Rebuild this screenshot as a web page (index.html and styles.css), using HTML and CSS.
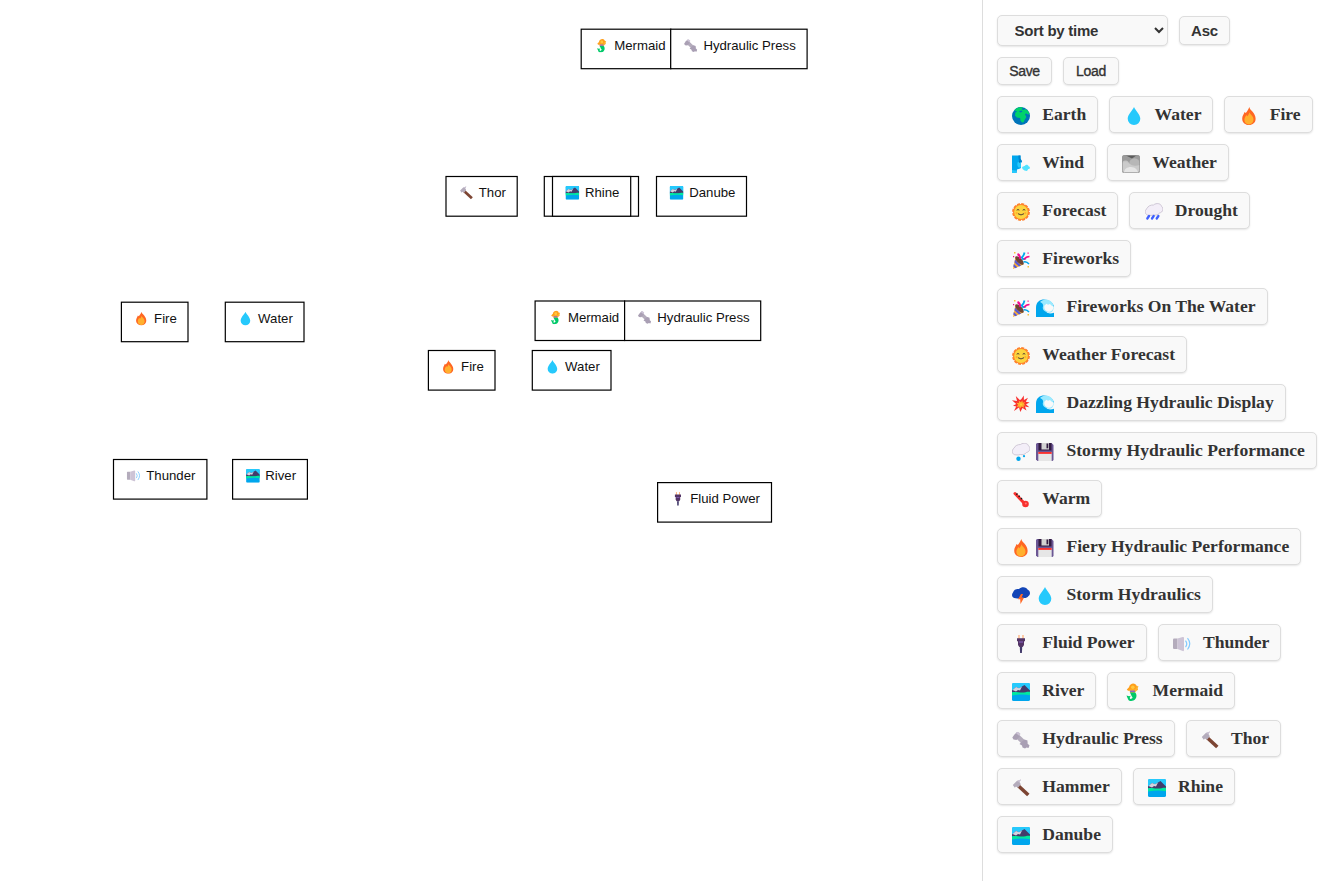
FILE: index.html
```html
<!DOCTYPE html>
<html lang="en">
<head>
<meta charset="utf-8">
<title>Craft</title>
<link rel="stylesheet" href="styles.css">
</head>
<body>
<svg class="defs" aria-hidden="true">
  <symbol id="earth" viewBox="0 0 18 18"><circle cx="9" cy="9" r="9" fill="#0074ba"/><path d="M2.300 3.200C4.500.8 8 0 11 .4l-1.500 1.800 2 .8 1.800-1 3.200 2.500.9 2.500-1.600.4-1.200-1-1.800.6 1.600 3-1.600 2.600-1.200 2.600-1.600.4-1.600-2-.2-2.600-3.400-.6-1.800-2 .4-2.800 1.800-1.200z" fill="#00d26a"/><path d="M7 4.300l2.500-.8 1 1.200-2.200.8z" fill="#0074ba"/></symbol>
  <symbol id="water" viewBox="0 0 18 18"><path d="M9 0c1.200 3 6.300 7.500 6.300 11.800a6.300 6.200 0 0 1-12.600 0C2.700 7.500 7.800 3 9 0z" fill="#26c9fc"/></symbol>
  <symbol id="fire" viewBox="0 0 18 18"><path d="M9.300 0c.4 2.600 2.200 3.200 3.300 4.800 1.600 2 3 4.200 3 6.900 0 3.900-2.900 6.300-6.500 6.300s-6.900-2.300-6.900-6.300c0-2.900 1.500-4.300 2.400-6.700l1.200 1C7.200 4.200 8.400 2.700 9.300 0z" fill="#ff6723"/><path d="M9.400 5.300c.5 2.400 4.100 3.400 4.100 7.200 0 3-1.900 4.900-4.500 4.900s-4.600-1.700-4.600-4.600c0-2.500 1.300-3.300 2-4.800l.9 1.200c1-1 1.700-2 2.100-3.900z" fill="#ffb02e"/></symbol>
  <symbol id="wind" viewBox="0 0 18 18"><path d="M0 .5h8.500v3l1.500 3-1 1v5.500l-1.500.7-2.500.8-.5 4H0z" fill="#00a6ed"/><path d="M6.500 .5h2v3L10 6.500 9 8H7.500C7 5 6 3 6.500.5z" fill="#0084ce"/><path d="M0 15l4 .5.500 3H0z" fill="#26c9fc"/><path d="M5.500 7.500c1-1 2-1 3.500 0v5H6.500c-1-1-1.500-3-1-5z" fill="#26c9fc"/><path d="M10 12l3-1.200c.5-1.500 3.300-1.200 3.500.5 2 .5 1.800 2.800-.2 2.800l-1.300 2-2.500-.6-2-1.500z" fill="#50e2ff"/><circle cx="7.500" cy="7" r=".6" fill="#17477a"/></symbol>
  <symbol id="fog" viewBox="0 0 18 18"><rect width="18" height="18" rx="2.500" fill="#9b9b9b"/><path d="M3 0h12l-5 3.500z" fill="#5c5c5c"/><circle cx="3.500" cy="9" r="3.500" fill="#c3c3c3"/><circle cx="12.500" cy="8.500" r="5.300" fill="#b7b7b7"/><path d="M0 8c3-2 6-1 8 1s6 2 10 1v6a2 2 0 0 1-2 2H2a2 2 0 0 1-2-2z" fill="#cbcbcb"/><path d="M2 18c0-4 3-6 7-6s7 3 7 6z" fill="#e6e6e6"/><rect x=".4" y=".4" width="17.200" height="17.200" rx="2" fill="none" stroke="#999" stroke-width=".8"/></symbol>
  <symbol id="sun" viewBox="0 0 18 18"><circle cx="9" cy="9" r="8" fill="#ff822d"/><circle cx="9" cy="9" r="7.900" fill="none" stroke="#ff822d" stroke-width="2" stroke-dasharray="2.900 1.236"/><circle cx="9" cy="9" r="6.900" fill="#fcd53f"/><path d="M4.700 7.200q1.300-1.400 2.600 0M10.700 7.200q1.300-1.400 2.600 0M6 10.700q3 2.500 6 0" fill="none" stroke="#402a32" stroke-width=".9"/><circle cx="4.700" cy="10.200" r="1.100" fill="#ffaf2e"/><circle cx="13.300" cy="10.200" r="1.100" fill="#ffaf2e"/></symbol>
  <symbol id="rain" viewBox="0 0 18 18"><path d="M4 12.300C0 12.500-1 7.500 2 5.500 3 2.800 6 1.800 8.500 2c3-2.500 7.500-1.500 8 1.300 2.500 2 1.500 6-2 6.700-1.500 2-4 2.500-6 2-1.500.5-3 .5-4.500.3z" fill="#f3eef8" stroke="#c5bccd" stroke-width=".8"/><path d="M4 13l-1.700 2.500M8.700 13L7 15.500M13.400 13l-1.700 2.500" stroke="#3f5fff" stroke-width="2.300" stroke-linecap="round"/></symbol>
  <symbol id="snow" viewBox="0 0 18 18"><path d="M4 11.900C0 12-1 7.200 2 5.200 3 2.500 6 1.500 8.500 1.500c3-2.300 7.500-1.200 8 1.300 2.500 2 1.500 6-2 6.700-1.500 2-4 2.500-6 2-1.500.5-3 .6-4.500.4z" fill="#f3eef8" stroke="#c5bccd" stroke-width=".8"/><circle cx="6.500" cy="15.700" r="2.200" fill="#00a6ed"/><circle cx="12" cy="13.200" r="1.100" fill="#00a6ed"/></symbol>
  <symbol id="party" viewBox="0 0 18 18"><path d="M3.500 6l8 7.500L1 18z" fill="#ffb02e"/><path d="M3 8.500l6.200 5.900-2.200 1.200-4.500-4.200zM1.800 13l3.500 3.200-2 1L1.300 15.500z" fill="#5b5bd0"/><ellipse cx="7.500" cy="9.500" rx="2.400" ry="5.500" transform="rotate(-45 7.500 9.500)" fill="#6d4534"/><path d="M5.500 3q2.500 1 2.800 5" fill="none" stroke="#f70a8d" stroke-width="2"/><path d="M12.500 1.500Q12 4.500 9.800 6.500l1.200 1.800 3-1" fill="none" stroke="#00a6ed" stroke-width="1.800"/><path d="M11.500 11q3-1 5.500 2" fill="none" stroke="#00a6ed" stroke-width="1.500"/><path d="M12 8.500q2-3 5.500-3" fill="none" stroke="#f70a8d" stroke-width="1.700"/><path d="M2 1h1.500v1.500H2zM15.500 15H17v1.500h-1.500z" fill="#f9c23c"/><path d="M1 5h1.200v1.200H1zM15.500 1.500h1.200v1.200h-1.200z" fill="#f70a8d"/></symbol>
  <symbol id="wave" viewBox="0 0 18 18"><path d="M0 9C0 3 4 .6 8 .6c5 0 8.500 3 10 6.400-2 3-7 4-7.500 6 1.500 2 5 1.500 7.500.8V18H0z" fill="#00a6ed"/><path d="M4 3C7-.3 13-.5 16 3.500c1.200 1.500 2 3 1.500 6.500-.6 3-3 4.400-6.500 3.300C8 12.500 6 10 7 7.500 7.500 5.500 6.500 4 4 3z" fill="#9beaff"/><path d="M8.500 6.500l2-1.700 1.500 1 2-.8 1.500 1.500 1.800 1c.2 3-1.500 5.300-4.300 5.200-3.500-.2-5.500-3-4.500-6.200z" fill="#f9f9f9"/></symbol>
  <symbol id="boom" viewBox="0 0 18 18"><path d="M9 4.500l2.800-4 .1 4.500L16 2.800l-2.200 4 3.800.7-3.600 1.800 3.300 2.900-4.300-.6 1.500 3.900-4-2.500-2.200 4-1.300-4.500L2 16l2.200-4.500L1 10.700l3.200-1.700L0 5.200l5 .8L3.800 1l4 4z" fill="#f8312f"/><path d="M9 7.300l1.300-2 .5 2.500 2.300-.8-1.300 2 2 1.200-2.300.3.500 2.200-2.400-1.200-1.900 2.200-.5-2.200-2.700.5 1.600-2.300-1.800-2 2.700.3-.2-2.300z" fill="#ffb02e"/><circle cx="9" cy="9.500" r="1" fill="#fcd53f"/></symbol>
  <symbol id="floppy" viewBox="0 0 18 18"><path d="M1 0h14.500L17.500 2v15l-1 1H1.500L0 16.500V1z" fill="#6b5794"/><path d="M2.500 0h13v7.500h-13z" fill="#321b41"/><path d="M5.500 0H13v6.500H5.500z" fill="#d3d3d3"/><path d="M10.500 .5H12.300v4.800h-1.800z" fill="#321b41"/><path d="M2.300 9h13.400v9H2.300z" fill="#e6e6e6"/><path d="M2.300 9h13.400v1.900H2.300z" fill="#f8312f"/></symbol>
  <symbol id="thermo" viewBox="0 0 18 18"><path d="M3 2.500l9.500 10" stroke="#f8312f" stroke-width="3" stroke-linecap="round"/><circle cx="13.500" cy="13" r="3.300" fill="#f8312f"/><path d="M5.500 2.500l-1.200 1.200M7.800 4.800L6.600 6M10 7L8.800 8.200" stroke="#1c1c1c" stroke-width="1.300"/><circle cx="13.800" cy="12.500" r="1" fill="#ff7878"/></symbol>
  <symbol id="storm" viewBox="0 0 18 18"><path d="M4 11.300C0 11.500-1 7.500 1 5.500 1.800 2.500 4.500 1.500 7 2c2.500-3 8-2 8.500.5 3 1.300 3.200 5.200 1 6.500-1.500 2-3.500 2.500-6 1.700-2 1-4.500 1-6.500.6z" fill="#1345b7"/><path d="M9 7L6 12.200h2.200L8.500 17l3.500-6.300H9.700L11 7z" fill="#ff6723"/></symbol>
  <symbol id="plug" viewBox="0 0 18 18"><path d="M7 0v4M11 0v4" stroke="#ffb27a" stroke-width="1.300"/><path d="M5 3.300h8v3h-1V10l-1.300 2H7.300L6 10V6.300H5z" fill="#533566"/><path d="M7.800 12h2.400l-.3 6H8.100z" fill="#433b6b"/><path d="M7 7h4" stroke="#8d65c5" stroke-width="1"/></symbol>
  <symbol id="speaker" viewBox="0 0 18 18"><path d="M0 4.500Q0 3.500 1 3.500h3.500V14H1q-1 0-1-1z" fill="#b4acbc"/><path d="M4.500 3.500L9.700 2q1.300-.3 1.300 1v12q0 1.500-1.300 1L4.500 14z" fill="#cdc4d6"/><path d="M12.500 5.700q2.500 3.300 0 6.300M14.500 3.200q4.500 5.500 0 11.300" fill="none" stroke="#83cbff" stroke-width="1.200"/></symbol>
  <symbol id="river" viewBox="0 0 18 18"><rect width="18" height="18" rx="1.600" fill="#00a6ed"/><path d="M1.600 0h14.800A1.600 1.600 0 0 1 18 1.600V9H0V1.600A1.600 1.600 0 0 1 1.600 0z" fill="#26c9fc"/><path d="M0 7.500L4 4l3 1.200L12.500 2 18 7.500V10H0z" fill="#433b6b"/><path d="M.5 7L4 4l3 1.300 3-1.700L8 7.500 6 7 4 8.500z" fill="#d3d3e0"/><path d="M0 9.300c4-.8 6 .5 10 .2 3 0 5-1 8-.7v3.500c-5-1.200-12-1-18 .3z" fill="#00e8a0"/></symbol>
  <symbol id="mermaid" viewBox="0 0 18 18"><path d="M6 4.200C7-.3 12.500-.8 13.800 3L15 7l-2 .8H5L3.800 6.500z" fill="#ff9f1c"/><circle cx="9.800" cy="4.200" r="1.800" fill="#ffc83d"/><path d="M6.500 6.500H12l2.500-3.800 1 .7-2.500 5.200-1.500 1.500H7z" fill="#ffb52e"/><path d="M7 7.500h5v1.700H7z" fill="#8d65c5"/><path d="M7 9.500h5.300c2.200 2.500 1.200 7-1.800 8-2 .8-4.500.5-5.300-.8l3-1c1.500-.6 1.800-1.500.5-2.500zM3.500 12.500l2.500.7 1.700-.4-1 2.200 1.300 2.200-2.500-.3-1-2z" fill="#00c969"/></symbol>
  <symbol id="bolt" viewBox="0 0 18 18"><path d="M5 5l9 8.500" stroke="#b4acbc" stroke-width="4.500"/><path d="M.3 6.500L2.500 3.500 5 1l2.500 1L8 5 4.500 9l-3-.5z" fill="#aaa0b4"/><path d="M3.800 2L6 .8l2.500 2L7.500 5z" fill="#cdc4d6"/><path d="M7.500 13L10 10.500 12.500 8.500l3 1v3l2 2-1 2.500-2-.5-1.500 1-2.500-1-.5-2z" fill="#a99fb4"/></symbol>
  <symbol id="hammer" viewBox="0 0 18 18"><path d="M6 6.500L16.300 16" stroke="#7d4533" stroke-width="3.600"/><path d="M.8 6L4.800 2 9 .5 7.500 3l1.300 2.300-2.700 3.500L4 7.500 2.800 8.800z" fill="#b4acbc"/><path d="M4.800 2L9 .5 7.500 3z" fill="#cdc4d6"/></symbol>
</svg>

<div class="app">
  <main class="board">
    <svg class="canvas" width="982" height="881">
      <g transform="translate(581.200 29.200)"><rect width="89.600" height="39.500"/><use href="#mermaid" x="13.200" y="9.500" width="13.700" height="13.700"/><text x="33" y="20.800">Mermaid</text></g>
      <g transform="translate(670.700 29.200)"><rect width="136.400" height="39.500"/><use href="#bolt" x="13.200" y="9.500" width="13.700" height="13.700"/><text x="32.700" y="20.800">Hydraulic Press</text></g>
      <g transform="translate(446 176.500)"><rect width="71.200" height="39.700"/><use href="#hammer" x="13.500" y="9.500" width="13.700" height="13.700"/><text x="32.800" y="20.800">Thor</text></g>
      <g transform="translate(544.300 176.500)"><rect width="94.200" height="39.700"/></g>
      <g transform="translate(552.500 176.500)"><rect width="78.200" height="39.700"/><use href="#river" x="13" y="9.500" width="13.700" height="13.700"/><text x="32.500" y="20.800">Rhine</text></g>
      <g transform="translate(656.500 176.500)"><rect width="90" height="39.700"/><use href="#river" x="13.200" y="9.500" width="13.700" height="13.700"/><text x="32.700" y="20.800">Danube</text></g>
      <g transform="translate(121.400 302.200)"><rect width="66.600" height="39.500"/><use href="#fire" x="13" y="9.500" width="13.700" height="13.700"/><text x="32.700" y="20.800">Fire</text></g>
      <g transform="translate(225.300 302.200)"><rect width="78.700" height="39.500"/><use href="#water" x="13.300" y="9.500" width="13.700" height="13.700"/><text x="32.800" y="20.800">Water</text></g>
      <g transform="translate(535.100 301)"><rect width="89.500" height="39.500"/><use href="#mermaid" x="13.200" y="9.500" width="13.700" height="13.700"/><text x="32.800" y="20.800">Mermaid</text></g>
      <g transform="translate(624.600 301)"><rect width="136.100" height="39.500"/><use href="#bolt" x="13.200" y="9.500" width="13.700" height="13.700"/><text x="32.700" y="20.800">Hydraulic Press</text></g>
      <g transform="translate(428.400 350.500)"><rect width="66.600" height="39.600"/><use href="#fire" x="13" y="9.500" width="13.700" height="13.700"/><text x="32.700" y="20.500">Fire</text></g>
      <g transform="translate(532.300 350.500)"><rect width="78.700" height="39.600"/><use href="#water" x="13.300" y="9.500" width="13.700" height="13.700"/><text x="32.800" y="20.500">Water</text></g>
      <g transform="translate(113.500 459.500)"><rect width="93.400" height="39.600"/><use href="#speaker" x="13.300" y="9.500" width="13.700" height="13.700"/><text x="32.800" y="20.500">Thunder</text></g>
      <g transform="translate(232.600 459.500)"><rect width="74.800" height="39.600"/><use href="#river" x="13.500" y="9.500" width="13.700" height="13.700"/><text x="32.700" y="20.500">River</text></g>
      <g transform="translate(657.600 482.600)"><rect width="113.900" height="39.500"/><use href="#plug" x="13.500" y="9.500" width="13.700" height="13.700"/><text x="32.700" y="20.400">Fluid Power</text></g>
    </svg>
  </main>
  <aside class="sidebar">
    <div class="row controls"><select class="sort"><option>Sort by time</option></select><button class="btn order">Asc</button></div>
    <div class="row"><button class="btn save">Save</button><button class="btn load">Load</button></div>
    <div class="chips">
      <div class="chip"><svg><use href="#earth"/></svg><span>Earth</span></div>
      <div class="chip"><svg><use href="#water"/></svg><span>Water</span></div>
      <div class="chip"><svg><use href="#fire"/></svg><span>Fire</span></div>
      <div class="chip"><svg><use href="#wind"/></svg><span>Wind</span></div>
      <div class="chip"><svg><use href="#fog"/></svg><span>Weather</span></div>
      <div class="chip"><svg><use href="#sun"/></svg><span>Forecast</span></div>
      <div class="chip"><svg><use href="#rain"/></svg><span>Drought</span></div>
      <div class="chip"><svg><use href="#party"/></svg><span>Fireworks</span></div>
      <div class="chip"><svg><use href="#party"/></svg><svg><use href="#wave"/></svg><span>Fireworks On The Water</span></div>
      <div class="chip"><svg><use href="#sun"/></svg><span>Weather Forecast</span></div>
      <div class="chip"><svg><use href="#boom"/></svg><svg><use href="#wave"/></svg><span>Dazzling Hydraulic Display</span></div>
      <div class="chip"><svg><use href="#snow"/></svg><svg><use href="#floppy"/></svg><span>Stormy Hydraulic Performance</span></div>
      <div class="chip"><svg><use href="#thermo"/></svg><span>Warm</span></div>
      <div class="chip"><svg><use href="#fire"/></svg><svg><use href="#floppy"/></svg><span>Fiery Hydraulic Performance</span></div>
      <div class="chip"><svg><use href="#storm"/></svg><svg><use href="#water"/></svg><span>Storm Hydraulics</span></div>
      <div class="chip"><svg><use href="#plug"/></svg><span>Fluid Power</span></div>
      <div class="chip"><svg><use href="#speaker"/></svg><span>Thunder</span></div>
      <div class="chip"><svg><use href="#river"/></svg><span>River</span></div>
      <div class="chip"><svg><use href="#mermaid"/></svg><span>Mermaid</span></div>
      <div class="chip"><svg><use href="#bolt"/></svg><span>Hydraulic Press</span></div>
      <div class="chip"><svg><use href="#hammer"/></svg><span>Thor</span></div>
      <div class="chip"><svg><use href="#hammer"/></svg><span>Hammer</span></div>
      <div class="chip"><svg><use href="#river"/></svg><span>Rhine</span></div>
      <div class="chip"><svg><use href="#river"/></svg><span>Danube</span></div>
    </div>
  </aside>
</div>
</body>
</html>
```

FILE: styles.css
```css
* { box-sizing: border-box; }
body { margin: 0; background: #fff; color: #333; overflow: hidden; }
.defs { display: none; }
.app { display: flex; height: 881px; }
.board { width: 982px; flex: none; }
.canvas { display: block; }
.canvas rect { fill: #fff; stroke: #000; stroke-width: 1.2; }
.canvas text { font: 13.2px "Liberation Sans", Arial, sans-serif; fill: #111; }
.sidebar { width: 344px; flex: none; border-left: 1px solid #ddd; padding: 15px 0 0 14px; display: flex; flex-direction: column; gap: 11px; }
.row, .chips { display: flex; gap: 11px; align-items: center; }
.row.controls { align-items: flex-start; }
.chips { flex-wrap: wrap; }
.chip, .btn, .sort { background: #f9f9f9; border: 1px solid #ddd; border-radius: 5px; box-shadow: 0 1px 2px rgba(0, 0, 0, .1); color: #333; }
.sort { width: 171px; height: 31px; padding: 0 0 0 12.500px; font: bold 15px "Liberation Sans", Arial, sans-serif; letter-spacing: -.25px; }
.btn { padding: 0; font-family: "Liberation Sans", Arial, sans-serif; }
.order { width: 51px; height: 29px; margin-top: 1px; font-size: 15px; font-weight: 600; letter-spacing: -.15px; }
.save, .load { width: 55px; height: 28px; font-size: 14px; letter-spacing: -.3px; -webkit-text-stroke: .35px #333; }
.load { width: 56px; }
.chip { height: 37px; padding: 0 11px 0 14.300px; display: flex; align-items: center; font: bold 17.6px/20px "Liberation Serif", "Times New Roman", serif; white-space: nowrap; }
.chip svg { width: 18px; height: 18px; margin: 2px 6.200px 0 0; overflow: visible; }
.chip span { margin: -1px 0 1px 5.800px; }
```
